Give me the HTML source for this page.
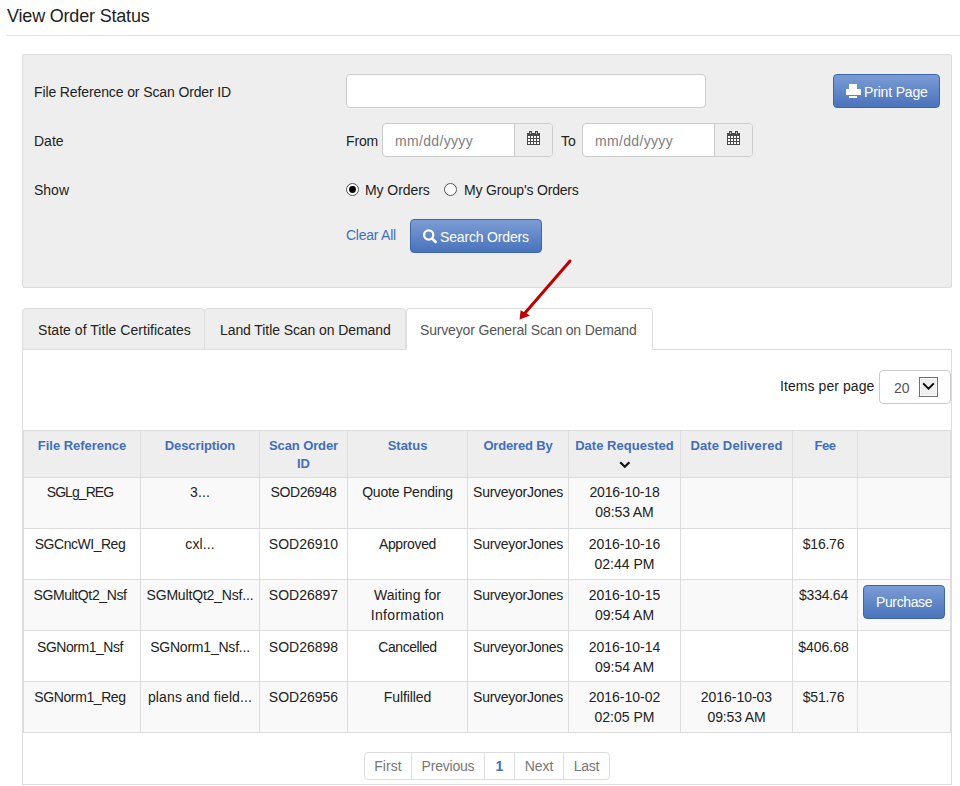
<!DOCTYPE html>
<html><head><meta charset="utf-8"><title>View Order Status</title>
<style>
*{box-sizing:border-box;margin:0;padding:0}
html,body{width:960px;height:786px;overflow:hidden;background:#fff}
body{position:relative;font-family:"Liberation Sans", sans-serif;font-size:14px;color:#222}
.a{position:absolute;white-space:nowrap}
.t{position:absolute;white-space:nowrap;line-height:20px;height:20px}
.btn{position:absolute;border:1px solid #3c65ad;border-radius:4px;background:linear-gradient(#7b9dd5,#4a73bb);color:#fff}
.inp{position:absolute;background:#fff;border:1px solid #ccc;border-radius:4px}
.hl{position:absolute;height:1px;background:#ddd}
.vl{position:absolute;width:1px;background:#ddd}
.cell{position:absolute;text-align:center;line-height:20px;padding-top:5px;white-space:nowrap}
.hcell{position:absolute;text-align:center;line-height:18px;padding-top:6px;font-size:13px;font-weight:bold;color:#426ebd}
</style></head>
<body>
<div class="t" style="left:7px;top:4px;font-size:18px;line-height:24px;height:24px"><span style="letter-spacing:-0.188px">View Order Status</span></div>
<div class="hl" style="left:7px;top:35px;width:953px;background:#e3e3e3"></div>
<div class="a" style="left:22px;top:54px;width:930px;height:234px;background:#eee;border:1px solid #dcdcdc;border-radius:2px"></div>
<div class="t" style="left:34px;top:82px"><span style="letter-spacing:-0.117px">File Reference or Scan Order ID</span></div>
<div class="t" style="left:34px;top:131px">Date</div>
<div class="t" style="left:34px;top:180px">Show</div>
<div class="inp" style="left:346px;top:74px;width:360px;height:34px"></div>
<div class="t" style="left:346px;top:131px"><span style="letter-spacing:-0.167px">From</span></div>
<div class="inp" style="left:382px;top:123px;width:171px;height:34px;overflow:hidden"><div class="a" style="left:131px;top:-1px;width:39px;height:34px;background:#eee;border-left:1px solid #ccc"></div><div class="t" style="left:12px;top:7px;color:#808080"><span style="letter-spacing:0.333px">mm/dd/yyyy</span></div></div><svg class="a" style="left:527px;top:131px" width="13" height="14" viewBox="0 0 13 14" shape-rendering="crispEdges"><rect x="0" y="2" width="13" height="12" fill="#4a4a4a"/><rect x="2" y="0" width="3" height="4" fill="#4a4a4a"/><rect x="8" y="0" width="3" height="4" fill="#4a4a4a"/><rect x="3" y="1" width="1" height="2" fill="#bbb"/><rect x="9" y="1" width="1" height="2" fill="#bbb"/><rect x="1" y="5" width="2" height="2" fill="#fff"/><rect x="4" y="5" width="2" height="2" fill="#fff"/><rect x="7" y="5" width="2" height="2" fill="#fff"/><rect x="10" y="5" width="2" height="2" fill="#fff"/><rect x="1" y="8" width="2" height="2" fill="#fff"/><rect x="4" y="8" width="2" height="2" fill="#fff"/><rect x="7" y="8" width="2" height="2" fill="#fff"/><rect x="10" y="8" width="2" height="2" fill="#fff"/><rect x="1" y="11" width="2" height="2" fill="#fff"/><rect x="4" y="11" width="2" height="2" fill="#fff"/><rect x="7" y="11" width="2" height="2" fill="#fff"/><rect x="10" y="11" width="2" height="2" fill="#fff"/></svg>
<div class="t" style="left:561px;top:131px">To</div>
<div class="inp" style="left:582px;top:123px;width:171px;height:34px;overflow:hidden"><div class="a" style="left:131px;top:-1px;width:39px;height:34px;background:#eee;border-left:1px solid #ccc"></div><div class="t" style="left:12px;top:7px;color:#808080"><span style="letter-spacing:0.333px">mm/dd/yyyy</span></div></div><svg class="a" style="left:727px;top:131px" width="13" height="14" viewBox="0 0 13 14" shape-rendering="crispEdges"><rect x="0" y="2" width="13" height="12" fill="#4a4a4a"/><rect x="2" y="0" width="3" height="4" fill="#4a4a4a"/><rect x="8" y="0" width="3" height="4" fill="#4a4a4a"/><rect x="3" y="1" width="1" height="2" fill="#bbb"/><rect x="9" y="1" width="1" height="2" fill="#bbb"/><rect x="1" y="5" width="2" height="2" fill="#fff"/><rect x="4" y="5" width="2" height="2" fill="#fff"/><rect x="7" y="5" width="2" height="2" fill="#fff"/><rect x="10" y="5" width="2" height="2" fill="#fff"/><rect x="1" y="8" width="2" height="2" fill="#fff"/><rect x="4" y="8" width="2" height="2" fill="#fff"/><rect x="7" y="8" width="2" height="2" fill="#fff"/><rect x="10" y="8" width="2" height="2" fill="#fff"/><rect x="1" y="11" width="2" height="2" fill="#fff"/><rect x="4" y="11" width="2" height="2" fill="#fff"/><rect x="7" y="11" width="2" height="2" fill="#fff"/><rect x="10" y="11" width="2" height="2" fill="#fff"/></svg>
<div class="btn" style="left:833px;top:74px;width:107px;height:34px"></div>
<svg class="a" style="left:845px;top:83px" width="16" height="15" viewBox="0 0 16 15" shape-rendering="crispEdges"><rect x="4" y="1" width="8" height="5" fill="#fff"/><rect x="1" y="6" width="15" height="6" fill="#fff"/><rect x="4" y="13" width="8" height="2" fill="#fff"/></svg>
<div class="t" style="left:864px;top:82px;color:#fff"><span style="letter-spacing:-0.167px">Print Page</span></div>
<svg class="a" style="left:346px;top:183px" width="13" height="13" viewBox="0 0 13 13"><circle cx="6.5" cy="6.5" r="6" fill="#fff" stroke="#555" stroke-width="1"/><circle cx="6.5" cy="6.5" r="3.4" fill="#000"/></svg>
<div class="t" style="left:365px;top:180px"><span style="letter-spacing:-0.062px">My Orders</span></div>
<svg class="a" style="left:444px;top:183px" width="13" height="13" viewBox="0 0 13 13"><circle cx="6.5" cy="6.5" r="6" fill="#fff" stroke="#555" stroke-width="1"/></svg>
<div class="t" style="left:464px;top:180px"><span style="letter-spacing:-0.188px">My Group's Orders</span></div>
<div class="t" style="left:346px;top:225px;color:#426ebd"><span style="letter-spacing:-0.25px">Clear All</span></div>
<div class="btn" style="left:410px;top:219px;width:132px;height:34px"></div>
<svg class="a" style="left:420px;top:226px" width="20" height="20" viewBox="0 0 20 20"><circle cx="8.7" cy="9" r="4.6" fill="none" stroke="#fff" stroke-width="2.3"/><line x1="12.2" y1="12.6" x2="15.6" y2="16" stroke="#fff" stroke-width="2.6" stroke-linecap="round"/></svg>
<div class="t" style="left:440px;top:227px;color:#fff"><span style="letter-spacing:-0.167px">Search Orders</span></div>
<div class="a" style="left:22px;top:308px;width:183px;height:42px;background:#eee;border:1px solid #ddd;border-radius:4px 4px 0 0"></div>
<div class="t" style="left:38px;top:320px"><span style="letter-spacing:0.038px">State of Title Certificates</span></div>
<div class="a" style="left:204px;top:308px;width:202px;height:42px;background:#eee;border:1px solid #ddd;border-radius:4px 4px 0 0"></div>
<div class="t" style="left:220px;top:320px"><span style="letter-spacing:-0.083px">Land Title Scan on Demand</span></div>
<div class="a" style="left:22px;top:349px;width:930px;height:436px;border:1px solid #ddd;background:#fff"></div>
<div class="a" style="left:406px;top:308px;width:247px;height:42px;background:#fff;border:1px solid #ddd;border-bottom-color:#fff;border-radius:4px 4px 0 0"></div>
<div class="t" style="left:420px;top:320px;color:#555"><span style="letter-spacing:-0.167px">Surveyor General Scan on Demand</span></div>
<svg class="a" style="left:500px;top:250px" width="90" height="80" viewBox="500 250 90 80"><line x1="570" y1="261" x2="525" y2="313" stroke="#c00000" stroke-width="3" stroke-linecap="round"/><polygon points="519.6,319.6 520.6,310.2 530.0,315.6" fill="#c00000"/></svg>
<div class="t" style="left:780px;top:376px"><span style="letter-spacing:0.077px">Items per page</span></div>
<div class="inp" style="left:879px;top:370px;width:72px;height:34px"></div>
<div class="t" style="left:894px;top:378px;color:#555">20</div>
<div class="a" style="left:919px;top:377px;width:19px;height:20px;border:1px solid #707070;background:#efefef;box-shadow:inset 0 0 0 1px #fafafa"></div>
<svg class="a" style="left:917px;top:375px" width="24" height="24" viewBox="917 375 24 24"><polyline points="923.2,383.4 928.5,388.7 933.8,383.4" fill="none" stroke="#000" stroke-width="1.9"/></svg>
<div class="a" style="left:23px;top:430px;width:928px;height:48px;background:#eee"></div>
<div class="a" style="left:23px;top:477px;width:928px;height:51px;background:#f9f9f9"></div>
<div class="a" style="left:23px;top:528px;width:928px;height:51px;background:#fff"></div>
<div class="a" style="left:23px;top:579px;width:928px;height:51px;background:#f9f9f9"></div>
<div class="a" style="left:23px;top:630px;width:928px;height:51px;background:#fff"></div>
<div class="a" style="left:23px;top:681px;width:928px;height:51px;background:#f9f9f9"></div>
<div class="hl" style="left:23px;top:430px;width:928px"></div>
<div class="hl" style="left:23px;top:477px;width:928px"></div>
<div class="hl" style="left:23px;top:528px;width:928px"></div>
<div class="hl" style="left:23px;top:579px;width:928px"></div>
<div class="hl" style="left:23px;top:630px;width:928px"></div>
<div class="hl" style="left:23px;top:681px;width:928px"></div>
<div class="hl" style="left:23px;top:732px;width:928px"></div>
<div class="vl" style="left:23px;top:430px;height:303px"></div>
<div class="vl" style="left:140px;top:430px;height:303px"></div>
<div class="vl" style="left:259px;top:430px;height:303px"></div>
<div class="vl" style="left:347px;top:430px;height:303px"></div>
<div class="vl" style="left:467px;top:430px;height:303px"></div>
<div class="vl" style="left:568px;top:430px;height:303px"></div>
<div class="vl" style="left:680px;top:430px;height:303px"></div>
<div class="vl" style="left:792px;top:430px;height:303px"></div>
<div class="vl" style="left:857px;top:430px;height:303px"></div>
<div class="vl" style="left:950px;top:430px;height:303px"></div>
<div class="hcell" style="left:24px;top:431px;width:116px;height:46px"><span style="letter-spacing:-0.038px">File Reference</span></div>
<div class="hcell" style="left:141px;top:431px;width:118px;height:46px"><span style="letter-spacing:-0.1px">Description</span></div>
<div class="hcell" style="left:260px;top:431px;width:87px;height:46px"><span style="letter-spacing:-0.111px">Scan Order</span><br>ID</div>
<div class="hcell" style="left:348px;top:431px;width:119px;height:46px">Status</div>
<div class="hcell" style="left:468px;top:431px;width:100px;height:46px"><span style="letter-spacing:-0.167px">Ordered By</span></div>
<div class="hcell" style="left:569px;top:431px;width:111px;height:46px"><span style="letter-spacing:0.023px">Date Requested</span></div>
<div class="hcell" style="left:681px;top:431px;width:111px;height:46px"><span style="letter-spacing:0.131px">Date Delivered</span></div>
<div class="hcell" style="left:793px;top:431px;width:64px;height:46px"><span style="letter-spacing:-0.5px">Fee</span></div>
<div class="hcell" style="left:858px;top:431px;width:92px;height:46px"></div>
<svg class="a" style="left:619px;top:461px" width="12" height="8" viewBox="0 0 12 8"><polyline points="1.2,1.2 5.8,5.8 10.4,1.2" fill="none" stroke="#111" stroke-width="2.2"/></svg>
<div class="cell" style="left:24px;top:477px;width:116px;height:50px;padding-right:4px"><span style="letter-spacing:-0.929px">SGLg_REG</span></div>
<div class="cell" style="left:141px;top:477px;width:118px;height:50px;padding-right:0px"><span style="letter-spacing:0.083px">3...</span></div>
<div class="cell" style="left:260px;top:477px;width:87px;height:50px;padding-right:0px"><span style="letter-spacing:-0.429px">SOD26948</span></div>
<div class="cell" style="left:348px;top:477px;width:119px;height:50px;padding-right:0px"><span style="letter-spacing:-0.208px">Quote Pending</span></div>
<div class="cell" style="left:468px;top:477px;width:100px;height:50px;padding-right:0px"><span style="letter-spacing:-0.271px">SurveyorJones</span></div>
<div class="cell" style="left:569px;top:477px;width:111px;height:50px;padding-right:0px"><span style="letter-spacing:-0.139px">2016-10-18</span><br><span style="letter-spacing:-0.107px">08:53 AM</span></div>
<div class="cell" style="left:24px;top:529px;width:116px;height:50px;padding-right:4px"><span style="letter-spacing:-0.475px">SGCncWI_Reg</span></div>
<div class="cell" style="left:141px;top:529px;width:118px;height:50px;padding-right:0px"><span style="letter-spacing:0.1px">cxl...</span></div>
<div class="cell" style="left:260px;top:529px;width:87px;height:50px;padding-right:0px">SOD26910</div>
<div class="cell" style="left:348px;top:529px;width:119px;height:50px;padding-right:0px"><span style="letter-spacing:-0.357px">Approved</span></div>
<div class="cell" style="left:468px;top:529px;width:100px;height:50px;padding-right:0px"><span style="letter-spacing:-0.271px">SurveyorJones</span></div>
<div class="cell" style="left:569px;top:529px;width:111px;height:50px;padding-right:0px">2016-10-16<br>02:44 PM</div>
<div class="cell" style="left:793px;top:529px;width:64px;height:50px;padding-right:3px"><span style="letter-spacing:-0.24px">$16.76</span></div>
<div class="cell" style="left:24px;top:580px;width:116px;height:50px;padding-right:4px"><span style="letter-spacing:-0.375px">SGMultQt2_Nsf</span></div>
<div class="cell" style="left:141px;top:580px;width:118px;height:50px;padding-right:0px"><span style="letter-spacing:-0.167px">SGMultQt2_Nsf...</span></div>
<div class="cell" style="left:260px;top:580px;width:87px;height:50px;padding-right:0px">SOD26897</div>
<div class="cell" style="left:348px;top:580px;width:119px;height:50px;padding-right:0px"><span style="letter-spacing:0.05px">Waiting for</span><br><span style="letter-spacing:0.3px">Information</span></div>
<div class="cell" style="left:468px;top:580px;width:100px;height:50px;padding-right:0px"><span style="letter-spacing:-0.271px">SurveyorJones</span></div>
<div class="cell" style="left:569px;top:580px;width:111px;height:50px;padding-right:0px">2016-10-15<br>09:54 AM</div>
<div class="cell" style="left:793px;top:580px;width:64px;height:50px;padding-right:3px"><span style="letter-spacing:-0.25px">$334.64</span></div>
<div class="btn" style="left:863px;top:585px;width:82px;height:34px"></div>
<div class="t" style="left:876px;top:592px;color:#fff"><span style="letter-spacing:-0.386px">Purchase</span></div>
<div class="cell" style="left:24px;top:632px;width:116px;height:50px;padding-right:4px"><span style="letter-spacing:-0.475px">SGNorm1_Nsf</span></div>
<div class="cell" style="left:141px;top:632px;width:118px;height:50px;padding-right:0px"><span style="letter-spacing:-0.212px">SGNorm1_Nsf...</span></div>
<div class="cell" style="left:260px;top:632px;width:87px;height:50px;padding-right:0px">SOD26898</div>
<div class="cell" style="left:348px;top:632px;width:119px;height:50px;padding-right:0px"><span style="letter-spacing:-0.438px">Cancelled</span></div>
<div class="cell" style="left:468px;top:632px;width:100px;height:50px;padding-right:0px"><span style="letter-spacing:-0.271px">SurveyorJones</span></div>
<div class="cell" style="left:569px;top:632px;width:111px;height:50px;padding-right:0px">2016-10-14<br>09:54 AM</div>
<div class="cell" style="left:793px;top:632px;width:64px;height:50px;padding-right:3px">$406.68</div>
<div class="cell" style="left:24px;top:682px;width:116px;height:50px;padding-right:4px"><span style="letter-spacing:-0.4px">SGNorm1_Reg</span></div>
<div class="cell" style="left:141px;top:682px;width:118px;height:50px;padding-right:0px"><span style="letter-spacing:0.118px">plans and field...</span></div>
<div class="cell" style="left:260px;top:682px;width:87px;height:50px;padding-right:0px">SOD26956</div>
<div class="cell" style="left:348px;top:682px;width:119px;height:50px;padding-right:0px"><span style="letter-spacing:-0.094px">Fulfilled</span></div>
<div class="cell" style="left:468px;top:682px;width:100px;height:50px;padding-right:0px"><span style="letter-spacing:-0.271px">SurveyorJones</span></div>
<div class="cell" style="left:569px;top:682px;width:111px;height:50px;padding-right:0px">2016-10-02<br>02:05 PM</div>
<div class="cell" style="left:681px;top:682px;width:111px;height:50px;padding-right:0px"><span style="letter-spacing:-0.033px">2016-10-03</span><br><span style="letter-spacing:-0.143px">09:53 AM</span></div>
<div class="cell" style="left:793px;top:682px;width:64px;height:50px;padding-right:3px"><span style="letter-spacing:-0.24px">$51.76</span></div>
<div class="a" style="left:364px;top:752px;width:246px;height:28px;border:1px solid #ddd;border-radius:4px;background:#fff"></div>
<div class="t" style="left:364px;top:756px;width:48px;text-align:center;color:#777;font-weight:normal"><span style="letter-spacing:0.05px">First</span></div>
<div class="vl" style="left:411px;top:752px;height:28px"></div>
<div class="t" style="left:411px;top:756px;width:74px;text-align:center;color:#777;font-weight:normal"><span style="letter-spacing:-0.214px">Previous</span></div>
<div class="vl" style="left:484px;top:752px;height:28px"></div>
<div class="t" style="left:484px;top:756px;width:31px;text-align:center;color:#426ebd;font-weight:bold">1</div>
<div class="vl" style="left:514px;top:752px;height:28px"></div>
<div class="t" style="left:514px;top:756px;width:50px;text-align:center;color:#777;font-weight:normal"><span style="letter-spacing:-0.1px">Next</span></div>
<div class="vl" style="left:563px;top:752px;height:28px"></div>
<div class="t" style="left:563px;top:756px;width:47px;text-align:center;color:#777;font-weight:normal"><span style="letter-spacing:-0.3px">Last</span></div>

</body></html>
